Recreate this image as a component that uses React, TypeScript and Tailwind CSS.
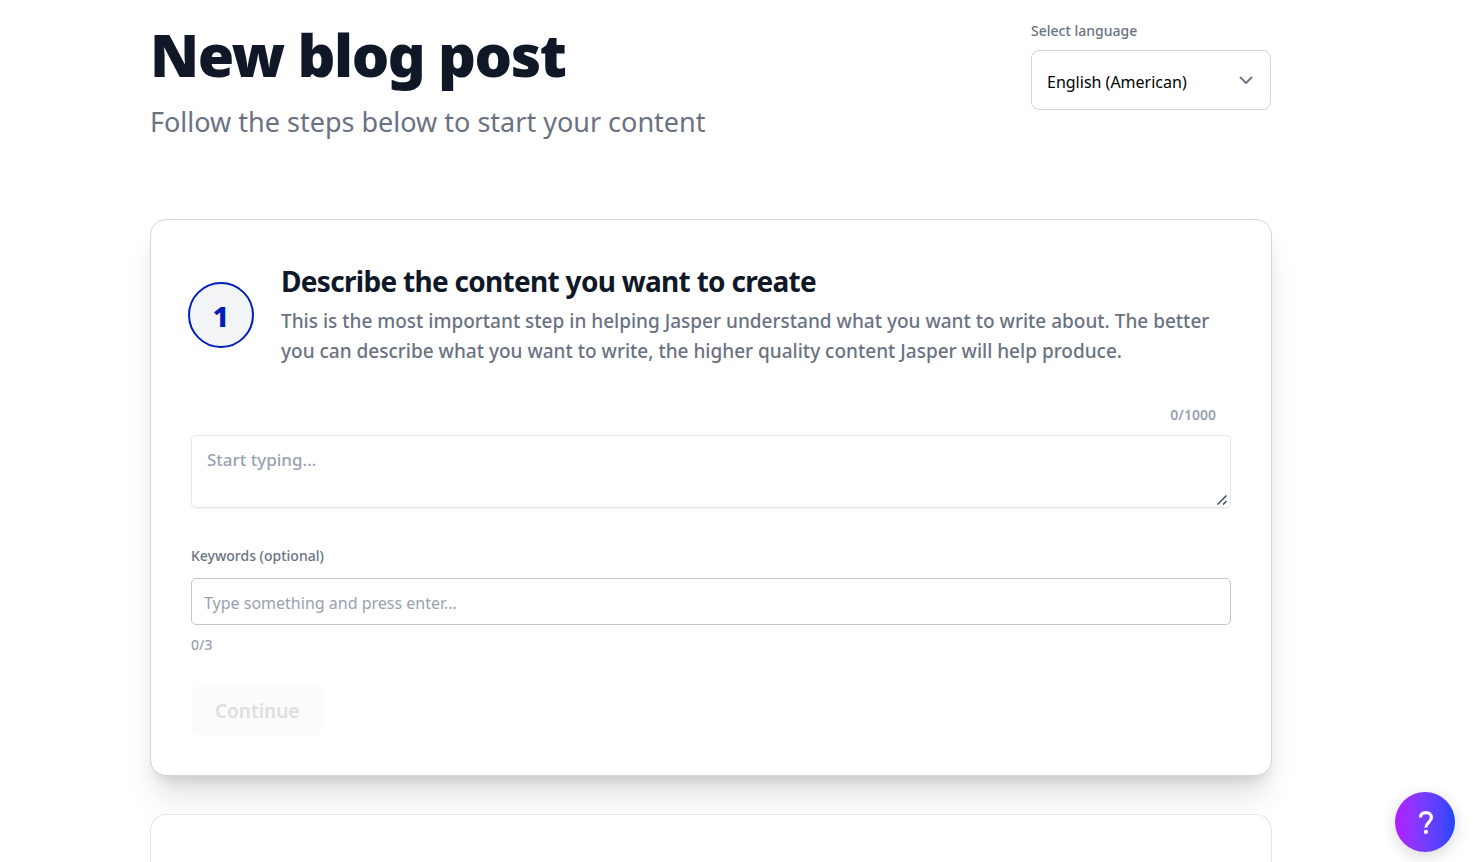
import { useState } from 'react';

const MAX_DESCRIPTION = 1000;
const MAX_KEYWORDS = 3;

function LanguageSelect() {
  const [language, setLanguage] = useState('en-US');

  return (
    <div className="w-60 shrink-0">
      <label htmlFor="language" className="block text-sm leading-5 font-medium text-gray-500">Select language</label>
      <div className="relative mt-[9px]">
        <select
          id="language"
          value={language}
          onChange={(e) => setLanguage(e.target.value)}
          className="block h-[60px] w-full appearance-none rounded-lg border border-gray-300 bg-white pt-1 pr-12 pl-[15px] text-base text-black"
        >
          <option value="en-US">English (American)</option>
          <option value="en-GB">English (British)</option>
        </select>
        <svg className="pointer-events-none absolute top-5 right-[15px] size-5 text-gray-500" viewBox="0 0 20 20" fill="none" stroke="currentColor" strokeWidth="1.8" strokeLinecap="round" strokeLinejoin="round" aria-hidden="true">
          <path d="M4.5 7.5 10 13l5.5-5.5" />
        </svg>
      </div>
    </div>
  );
}

function DescribeStep() {
  const [description, setDescription] = useState('');
  const [keyword, setKeyword] = useState('');
  const [keywords, setKeywords] = useState<string[]>([]);

  const handleKeyDown = (e: React.KeyboardEvent<HTMLInputElement>) => {
    if (e.key !== 'Enter' || !keyword.trim() || keywords.length >= MAX_KEYWORDS) return;
    e.preventDefault();
    setKeywords([...keywords, keyword.trim()]);
    setKeyword('');
  };

  return (
    <section className="rounded-2xl border border-gray-300 bg-white px-10 pt-10 pb-[39px] shadow-[0_25px_32px_-6px_rgba(0,0,0,0.12),0_10px_13px_-6px_rgba(0,0,0,0.12)]">
      <div className="flex items-center gap-[27px]">
        <div className="-ml-[3px] flex size-[66px] shrink-0 items-center justify-center rounded-full border-[2px] border-[#001eb9] bg-gray-100 pt-[2px] text-[29px] leading-8 font-extrabold text-[#001eb9]">
          1
        </div>
        <div className="py-[3px]">
          <h2 className="text-[28px] leading-9 font-bold tracking-tight text-gray-900">Describe the content you want to create</h2>
          <p className="mt-[7px] text-[19px] leading-[30px] font-medium text-gray-500">
            This is the most important step in helping Jasper understand what you want to write about. The better you can describe what you want to write, the higher quality content Jasper will help produce.
          </p>
        </div>
      </div>

      <div className="mt-9 pr-[15px] text-right text-sm leading-5 font-semibold text-gray-400">
        {description.length}/{MAX_DESCRIPTION}
      </div>
      <div className="relative mt-[10px]">
        <textarea
          aria-label="Content description"
          value={description}
          maxLength={MAX_DESCRIPTION}
          onChange={(e) => setDescription(e.target.value)}
          placeholder="Start typing..."
          className="block h-[73px] w-full resize-y rounded-[5px] border border-gray-200 px-[15px] py-3 text-[17px] leading-6 font-medium shadow-xs placeholder:text-gray-400 [&::-webkit-resizer]:bg-transparent"
        />
        {/* Resize grip */}
        <svg className="pointer-events-none absolute right-1 bottom-[3px] size-[10px] text-gray-700" viewBox="0 0 10 10" stroke="currentColor" strokeWidth="1.4" aria-hidden="true">
          <path d="M0.5 9.5 9.5 0.5M6 9.5l3.5-3.5" />
        </svg>
      </div>

      <label htmlFor="keywords" className="mt-[38px] block text-sm leading-5 font-medium text-gray-500">Keywords (optional)</label>
      <input
        id="keywords"
        type="text"
        value={keyword}
        onChange={(e) => setKeyword(e.target.value)}
        onKeyDown={handleKeyDown}
        placeholder="Type something and press enter..."
        className="mt-3 block h-[47px] w-full rounded-[5px] border border-[#c6c6c6] px-3 pt-[2px] text-base placeholder:text-gray-400"
      />
      <div className="mt-[10px] text-sm leading-5 font-medium text-gray-400">{keywords.length}/{MAX_KEYWORDS}</div>

      <button type="button" disabled={!description} className="mt-[30px] block h-[51px] rounded-[10px] bg-gray-100 px-6 pt-[2px] text-[19px] font-semibold text-gray-500 disabled:bg-[#fbfbfb] disabled:text-[#dcdee2]">
        Continue
      </button>
    </section>
  );
}

export default function App() {
  return (
    <div className="min-h-screen bg-white pr-[51px] font-['Noto_Sans',sans-serif]">
      <main className="mx-auto flex min-h-screen max-w-[1122px] flex-col pt-5">
        <header className="mb-[78px] flex items-start justify-between pr-px">
          <div>
            <h1 className="text-[59px] leading-[68px] font-black tracking-tight text-gray-900">New blog post</h1>
            <p className="mt-[14px] text-[27px] leading-[39px] text-gray-500">Follow the steps below to start your content</p>
          </div>
          <div className="pt-px">
            <LanguageSelect />
          </div>
        </header>

        <DescribeStep />

        <section className="mt-[38px] flex-1 rounded-t-2xl border border-b-0 border-gray-200 bg-white" />
      </main>

      <button type="button" aria-label="Help" className="fixed right-[18px] bottom-[10px] flex size-[60px] items-center justify-center rounded-full bg-linear-to-r from-[#b01aff] to-[#1a44ff] text-white shadow-[0_4px_16px_rgba(0,0,0,0.16)]">
        <svg className="h-[26px] w-[18px]" viewBox="0 0 18 26" fill="none" stroke="currentColor" strokeWidth="3.2" aria-hidden="true">
          <path d="M4.6 8.6C4.6 5.4 6.8 3.7 10 3.7s5.4 1.9 5.4 4.9c0 4.6-5.5 5-5.5 10" />
          <circle cx="9.9" cy="22.9" r="2.1" fill="currentColor" stroke="none" />
        </svg>
      </button>
    </div>
  );
}
